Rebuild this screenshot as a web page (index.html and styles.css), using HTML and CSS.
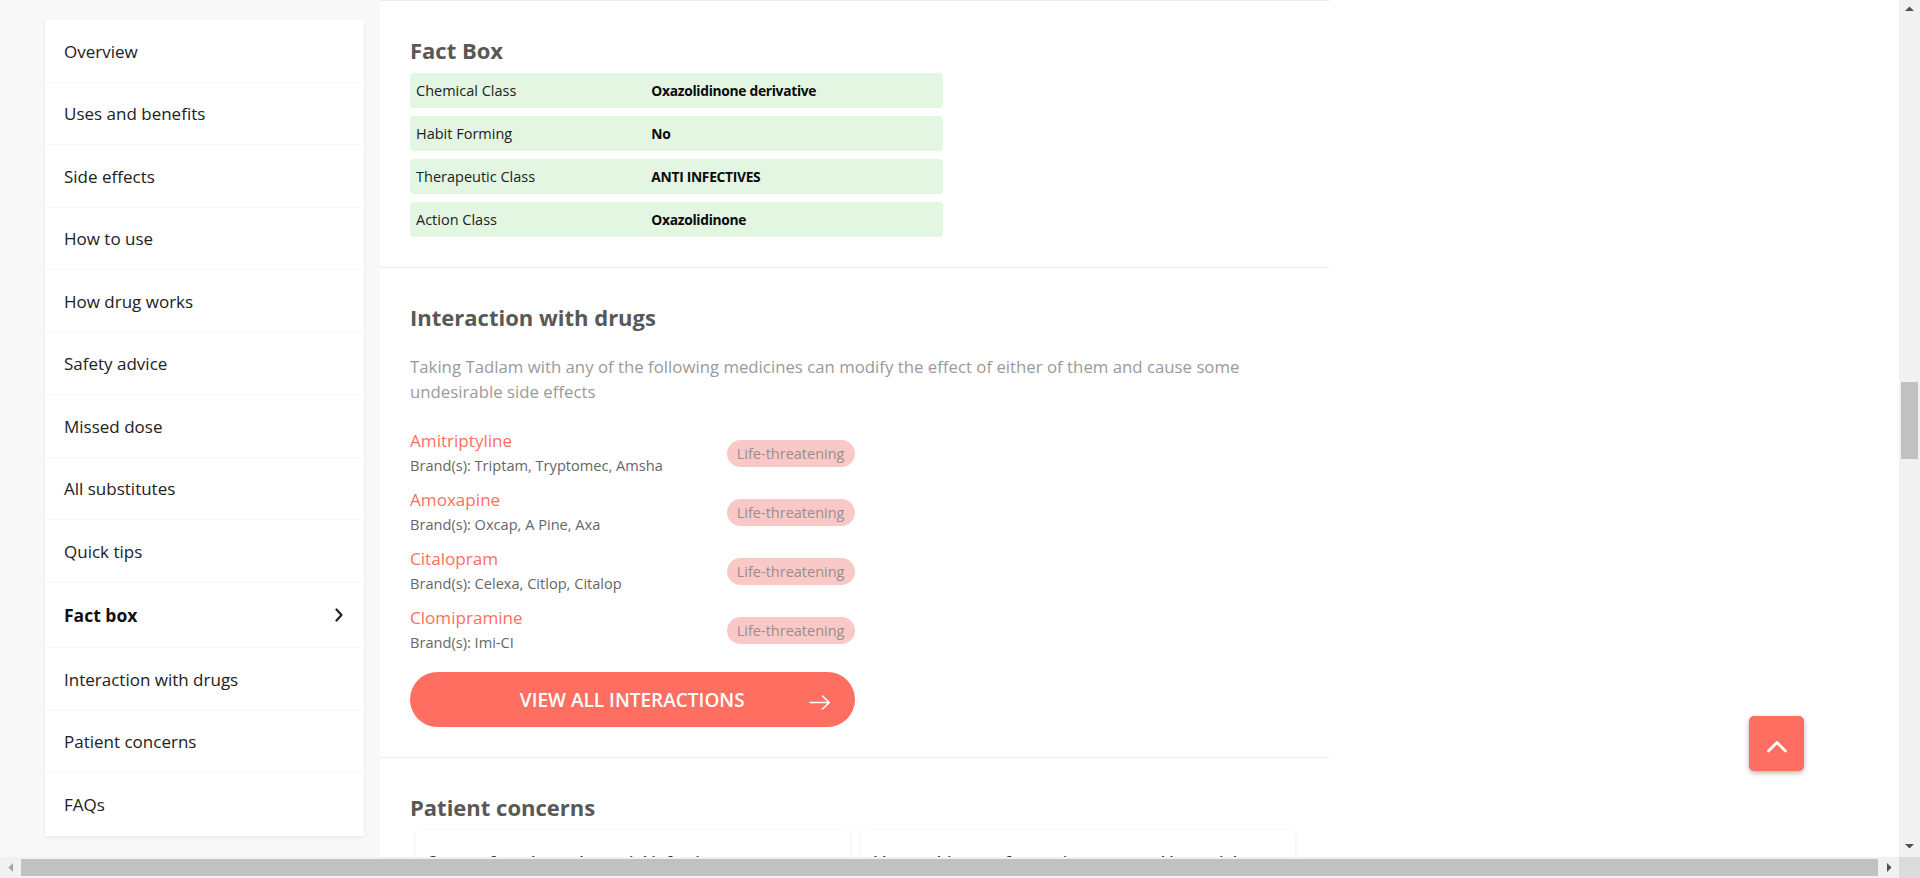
FILE: index.html
```html
<!DOCTYPE html>
<html lang="en">
<head>
<meta charset="utf-8">
<title>Tadlam - Fact Box</title>
<link rel="stylesheet" href="styles.css">
</head>
<body>
<div class="page">
  <aside class="side">
    <nav class="toc">
      <a class="toc-item">Overview</a>
      <a class="toc-item">Uses and benefits</a>
      <a class="toc-item">Side effects</a>
      <a class="toc-item">How to use</a>
      <a class="toc-item">How drug works</a>
      <a class="toc-item">Safety advice</a>
      <a class="toc-item">Missed dose</a>
      <a class="toc-item">All substitutes</a>
      <a class="toc-item">Quick tips</a>
      <a class="toc-item active">Fact box
        <svg class="chev" width="8" height="14" viewBox="0 0 8 14"><polyline points="1.5,1.5 6.5,7 1.5,12.5" fill="none" stroke="#212121" stroke-width="2.2" stroke-linecap="round" stroke-linejoin="round"/></svg>
      </a>
      <a class="toc-item">Interaction with drugs</a>
      <a class="toc-item">Patient concerns</a>
      <a class="toc-item last">FAQs</a>
    </nav>
    <div class="side-next"></div>
  </aside>

  <main class="main">
    <section class="sec">
      <h2 class="sec-title">Fact Box</h2>
      <div class="facts">
        <div class="fact-row"><span class="fact-label">Chemical Class</span><span class="fact-value">Oxazolidinone derivative</span></div>
        <div class="fact-row"><span class="fact-label">Habit Forming</span><span class="fact-value">No</span></div>
        <div class="fact-row"><span class="fact-label">Therapeutic Class</span><span class="fact-value">ANTI INFECTIVES</span></div>
        <div class="fact-row"><span class="fact-label">Action Class</span><span class="fact-value">Oxazolidinone</span></div>
      </div>
    </section>

    <section class="sec">
      <h2 class="sec-title">Interaction with drugs</h2>
      <p class="intro">Taking Tadlam with any of the following medicines can modify the effect of either of them and cause some undesirable side effects</p>
      <div class="drugs">
        <div class="drug">
          <div class="drug-info"><div class="drug-name">Amitriptyline</div><div class="drug-brand">Brand(s): Triptam, Tryptomec, Amsha</div></div>
          <span class="badge">Life-threatening</span>
        </div>
        <div class="drug">
          <div class="drug-info"><div class="drug-name">Amoxapine</div><div class="drug-brand">Brand(s): Oxcap, A Pine, Axa</div></div>
          <span class="badge">Life-threatening</span>
        </div>
        <div class="drug">
          <div class="drug-info"><div class="drug-name">Citalopram</div><div class="drug-brand">Brand(s): Celexa, Citlop, Citalop</div></div>
          <span class="badge">Life-threatening</span>
        </div>
        <div class="drug">
          <div class="drug-info"><div class="drug-name">Clomipramine</div><div class="drug-brand">Brand(s): Imi-CI</div></div>
          <span class="badge">Life-threatening</span>
        </div>
      </div>
      <a class="btn-all">
        <span class="btn-spacer"></span>
        <span class="btn-text">VIEW ALL INTERACTIONS</span>
        <svg class="btn-arrow" width="22" height="16" viewBox="0 0 22 16"><path d="M1 8.5H20M13.5 2L20.3 8.5L13.5 15" fill="none" stroke="#fff" stroke-width="1.6" stroke-linecap="round" stroke-linejoin="round"/></svg>
      </a>
    </section>

    <section class="sec">
      <h2 class="sec-title">Patient concerns</h2>
      <div class="concerns">
        <div class="concern"><p class="concern-q">Scar on face due to bacterial infections</p></div>
        <div class="concern"><p class="concern-q">I have a history of recurring yeast and bacterial</p></div>
      </div>
    </section>
  </main>
  <div class="rest"></div>
</div>

<a class="to-top" aria-label="Back to top">
  <svg width="55" height="55" viewBox="0 0 55 55"><polyline points="19.5,35 28,26.5 36.5,35" fill="none" stroke="#fff" stroke-width="2.8" stroke-linecap="round" stroke-linejoin="round"/></svg>
</a>

<div class="vscroll">
  <svg class="arr arr-up" width="9" height="6" viewBox="0 0 9 6"><polygon points="0,5 4.5,0.5 9,5" fill="#505050"/></svg>
  <div class="vthumb"></div>
  <svg class="arr arr-down" width="9" height="6" viewBox="0 0 9 6"><polygon points="0,1 4.5,5.5 9,1" fill="#505050"/></svg>
</div>
<div class="hscroll">
  <svg class="arr arr-left" width="6" height="9" viewBox="0 0 6 9"><polygon points="5,0 0.5,4.5 5,9" fill="#a3a3a3"/></svg>
  <div class="hthumb"></div>
  <svg class="arr arr-right" width="6" height="9" viewBox="0 0 6 9"><polygon points="1,0 5.5,4.5 1,9" fill="#505050"/></svg>
</div>
<div class="corner"></div>
</body>
</html>
```

FILE: styles.css
```css
* { box-sizing: border-box; }

html, body {
  margin: 0;
  padding: 0;
  height: 100%;
  overflow: hidden;
  background: #ffffff;
  font-family: "Open Sans", "Noto Sans", "Liberation Sans", sans-serif;
  color: #212121;
}

.page {
  display: flex;
  align-items: flex-start;
  width: 1899px;
  min-height: 1200px;
}

/* ---------- sidebar ---------- */
.side {
  width: 380px;
  flex: none;
  align-self: stretch;
  background: #f8f8f8;
  padding: 20px 16px 0 45px;
}

.toc {
  display: flex;
  flex-direction: column;
  background: #ffffff;
  box-shadow: 0 1px 3px rgba(0, 0, 0, 0.08);
}

.toc-item {
  display: flex;
  align-items: center;
  justify-content: space-between;
  height: 62.5px;
  padding: 1px 21px 0 19px;
  font-size: 17px;
  color: #212121;
  border-bottom: 1px solid #f6f6f6;
  cursor: pointer;
}

.toc-item.last { border-bottom: 0; }

.toc-item.active {
  height: 65.5px;
  font-weight: 700;
  font-size: 17.5px;
  color: #111111;
}

.chev { display: block; }

.side-next {
  margin-top: 21px;
  height: 80px;
  background: #ffffff;
  border-top: 1px solid #f0f0f0;
}

/* ---------- main ---------- */
.main {
  width: 949px;
  flex: none;
  background: #ffffff;
  border-top: 1px solid #ececec;
}

.rest { flex: 1; }

.sec {
  padding: 34px 30px 30px;
  border-bottom: 1px solid #ececec;
}

.sec-title {
  margin: 0;
  font-size: 22px;
  line-height: 30px;
  font-weight: 700;
  color: #585858;
}

/* fact box */
.facts {
  width: 60%;
  margin-top: 8px;
  display: flex;
  flex-direction: column;
  gap: 8px;
}

.fact-row {
  display: flex;
  align-items: center;
  height: 35px;
  padding-left: 6px;
  background: #e2f6e2;
  border-radius: 4px;
  font-size: 14.5px;
}

.fact-label {
  width: calc(45% - 2px);
  color: #212121;
}

.fact-value {
  font-weight: 700;
  font-size: 13.8px;
  letter-spacing: -0.3px;
  color: #0a0a0a;
}

/* interactions */
.intro {
  margin: 22px 0 0;
  font-size: 16.8px;
  line-height: 25px;
  color: #9a9a9a;
}

.drugs {
  width: 50%;
  margin-top: 25px;
  display: flex;
  flex-direction: column;
  gap: 11px;
}

.drug {
  display: flex;
  align-items: center;
  justify-content: space-between;
}

.drug-name {
  font-size: 17.1px;
  line-height: 24px;
  color: #ff6f61;
}

.drug-brand {
  font-size: 14.6px;
  line-height: 24px;
  color: #666666;
}

.badge {
  display: inline-flex;
  align-items: center;
  height: 27px;
  padding: 0 10px;
  border-radius: 14px;
  background: #f8c9c6;
  color: #9d8c8c;
  font-size: 14.5px;
}

.btn-all {
  margin-top: 18px;
  width: 50%;
  height: 55px;
  border-radius: 28px;
  background: #ff6f61;
  color: #ffffff;
  display: grid;
  grid-template-columns: 1fr auto 1fr;
  align-items: center;
  cursor: pointer;
}

.btn-text {
  font-size: 19px;
  font-weight: 600;
  letter-spacing: 0;
}

.btn-arrow {
  justify-self: end;
  margin-right: 24px;
  margin-top: 4px;
}

/* patient concerns */
.concerns {
  margin-top: 8px;
  padding: 0 4px 0 6px;
  display: grid;
  grid-template-columns: 1fr 1fr;
  gap: 11px;
}

.concern {
  background: #ffffff;
  border-radius: 4px;
  box-shadow: 0 1px 4px rgba(0, 0, 0, 0.08);
  padding: 20px 12px;
  min-height: 120px;
}

.concern-q {
  margin: 0;
  font-size: 16px;
  font-weight: 600;
  line-height: 24px;
  color: #333333;
}

/* ---------- back to top ---------- */
.to-top {
  position: fixed;
  left: 1749px;
  top: 716px;
  width: 55px;
  height: 55px;
  border-radius: 5px;
  background: #ff6f61;
  box-shadow: 0 2px 5px rgba(0, 0, 0, 0.3);
  display: block;
}

.to-top svg { display: block; }

/* ---------- fake browser scrollbars ---------- */
.vscroll {
  position: fixed;
  right: 0;
  top: 0;
  width: 21px;
  height: 857px;
  background: #f1f1f1;
}

.vthumb {
  position: absolute;
  left: 2px;
  right: 2px;
  top: 382px;
  height: 77px;
  background: #c1c1c1;
}

.hscroll {
  position: fixed;
  left: 0;
  bottom: 0;
  width: 1899px;
  height: 21px;
  background: #f1f1f1;
}

.hthumb {
  position: absolute;
  left: 21px;
  width: 1857px;
  top: 2px;
  bottom: 2px;
  background: #c1c1c1;
}

.corner {
  position: fixed;
  right: 0;
  bottom: 0;
  width: 21px;
  height: 21px;
  background: #dcdcdc;
}

.arr { position: absolute; display: block; }
.arr-up { left: 6px; top: 6px; }
.arr-down { left: 6px; top: 843px; }
.arr-left { left: 8px; top: 6px; }
.arr-right { left: 1886px; top: 6px; }
```
